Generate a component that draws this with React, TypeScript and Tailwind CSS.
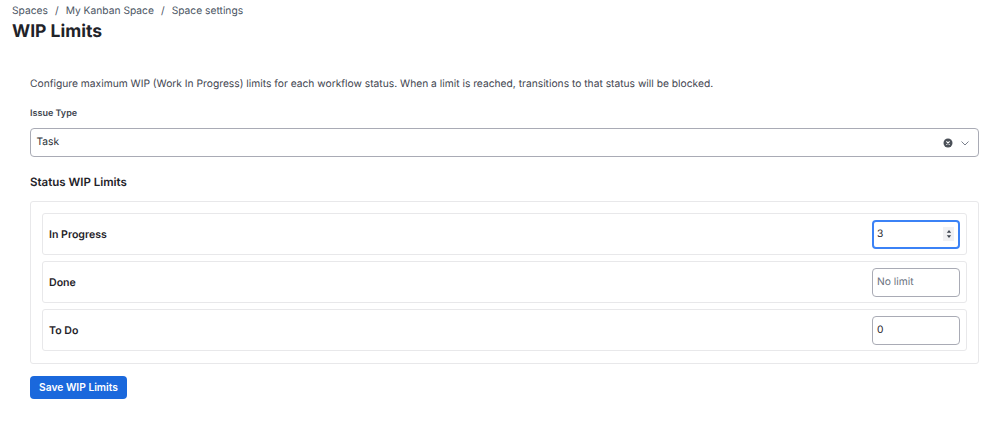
export default function App() {
  const font = { fontFamily: "Inter, sans-serif" };
  return (
    <div style={font} className="h-[432px] w-[999px] overflow-hidden bg-white text-[#1f2329] antialiased [text-rendering:geometricPrecision]">
      <div className="pl-3 pr-5 pt-[4px]">
        <div className="flex h-[14px] items-center text-[10.25px] leading-[14px] text-[#4b5563]">
          <span>Spaces</span>
          <span className="mx-[7px]">/</span>
          <span>My Kanban Space</span>
          <span className="mx-[7px]">/</span>
          <span>Space settings</span>
        </div>
        <h1 className="mt-[2px] text-[17.5px] font-bold leading-[24px] text-[#1f2329]">WIP Limits</h1>
      </div>
      <div className="pl-[30px] pr-5 pt-[32px]">
        <p className="text-[10.25px] leading-[16px] text-[#3f4650]">
          Configure maximum WIP (Work In Progress) limits for each workflow status. When a limit is reached, transitions to that status will be blocked.
        </p>
        <label className="mt-[16px] block text-[9px] font-semibold leading-[12px] text-[#3f4650]">Issue Type</label>
        <div className="mt-[8px] flex h-[29px] items-center justify-between rounded-[4px] border border-[#a9abb5] pl-[5.5px] pr-[8px]">
          <span className="pt-[1px] text-[10.25px] text-[#2a2f36]">Task</span>
          <div className="flex items-center gap-[7px]">
            <svg width="10" height="10" viewBox="0 0 10 10">
              <circle cx="5" cy="5" r="4.5" fill="#4b5058" />
              <path d="M3.4 3.4l3.2 3.2M6.6 3.4l-3.2 3.2" stroke="#fff" strokeWidth="1.1" />
            </svg>
            <svg width="10" height="10" viewBox="0 0 10 10" fill="none">
              <path d="M1.5 3.5L5 7l3.5-3.5" stroke="#6b7280" strokeWidth="0.9" />
            </svg>
          </div>
        </div>
        <h2 className="mt-[17px] text-[11.5px] font-semibold leading-[16px] text-[#1f2329]">Status WIP Limits</h2>
        <div className="mt-[11px] flex flex-col gap-[6px] rounded-[3px] border border-[#e8e8ea] px-[11px] pb-[12px] pt-[11px]">
          <Row label="In Progress">
            <div className="flex h-[29px] w-[88px] items-center justify-between rounded-[4px] border-2 border-[#3b82f6] pl-[3px] pr-[4px] text-[10.25px] text-[#1f2329]">
              <span className="pt-[2px]">3</span>
              <div className="flex h-[14px] w-[11px] items-center justify-center bg-[#f1f1f3]">
                <svg width="6" height="10" viewBox="0 0 6 10">
                  <path d="M3 1l2.2 2.8H0.8zM3 9L0.8 6.2h4.4z" fill="#3f4650" />
                </svg>
              </div>
            </div>
          </Row>
          <Row label="Done">
            <div className="flex h-[29px] w-[88px] items-center rounded-[4px] border border-[#a9abb5] pl-[4px] pt-[2px] text-[10.25px] text-[#6b7280]">No limit</div>
          </Row>
          <Row label="To Do">
            <div className="flex h-[29px] w-[88px] items-center rounded-[4px] border border-[#a9abb5] pl-[4px] pt-[2px] text-[10.25px] text-[#1f2329]">0</div>
          </Row>
        </div>
        <button className="mt-[12px] flex h-[23px] w-[97px] items-center justify-center rounded-[4px] bg-[#1a68dc] text-[10.25px] font-semibold text-white">
          Save WIP Limits
        </button>
      </div>
    </div>
  );
}

function Row({ label, children }: { label: string; children: React.ReactNode }) {
  return (
    <div className="flex h-[42px] items-center justify-between rounded-[3px] border border-[#e8e8ea] pl-[6px] pr-[6px]">
      <span className="pt-[1px] text-[10.6px] font-semibold text-[#1f2329]">{label}</span>
      {children}
    </div>
  );
}
